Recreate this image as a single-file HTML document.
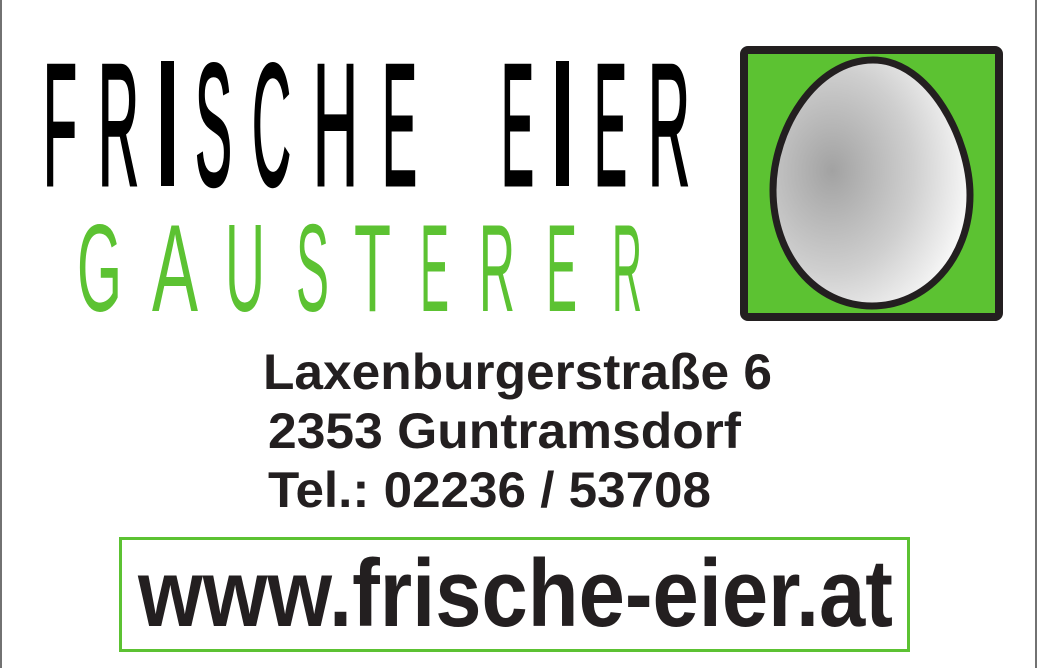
<!DOCTYPE html>
<html><head><meta charset="utf-8"><style>
html,body{margin:0;padding:0;background:#fff;}
svg{display:block}
</style></head><body>
<svg width="1039" height="668" viewBox="0 0 1039 668" xmlns="http://www.w3.org/2000/svg">
<defs>
<radialGradient id="eg" cx="0.3" cy="0.45" r="0.75">
<stop offset="0" stop-color="#a2a2a2"/>
<stop offset="0.55" stop-color="#cfcfcf"/>
<stop offset="0.85" stop-color="#eeeeee"/>
<stop offset="1" stop-color="#ffffff"/>
</radialGradient>
</defs>
<rect x="0" y="0" width="1039" height="668" fill="#fff"/>
<line x1="1" y1="0" x2="1" y2="668" stroke="#444" stroke-width="1.5"/>
<line x1="1036" y1="0" x2="1036" y2="668" stroke="#444" stroke-width="1.5"/>
<g font-family="Liberation Sans, sans-serif">
<g fill="#000" stroke="#000" stroke-width="3" font-size="174">
<text x="43" y="185" textLength="34" lengthAdjust="spacingAndGlyphs">F</text>
<text x="98" y="185" textLength="41" lengthAdjust="spacingAndGlyphs">R</text>
<text x="195" y="185" textLength="37" lengthAdjust="spacingAndGlyphs">S</text>
<text x="252" y="185" textLength="39" lengthAdjust="spacingAndGlyphs">C</text>
<text x="313" y="185" textLength="45" lengthAdjust="spacingAndGlyphs">H</text>
<text x="382" y="185" textLength="35" lengthAdjust="spacingAndGlyphs">E</text>
<text x="501" y="185" textLength="33" lengthAdjust="spacingAndGlyphs">E</text>
<text x="594" y="185" textLength="33" lengthAdjust="spacingAndGlyphs">E</text>
<text x="648" y="185" textLength="42" lengthAdjust="spacingAndGlyphs">R</text>
</g>
<rect x="161" y="61" width="13" height="125" fill="#000"/>
<rect x="556" y="61" width="13" height="125" fill="#000"/>
<g fill="#5cc232" font-size="124">
<text x="77" y="311" textLength="45" lengthAdjust="spacingAndGlyphs">G</text>
<text x="152" y="311" textLength="46" lengthAdjust="spacingAndGlyphs">A</text>
<text x="225" y="311" textLength="40" lengthAdjust="spacingAndGlyphs">U</text>
<text x="296" y="311" textLength="33" lengthAdjust="spacingAndGlyphs">S</text>
<text x="354" y="311" textLength="37" lengthAdjust="spacingAndGlyphs">T</text>
<text x="420" y="311" textLength="29" lengthAdjust="spacingAndGlyphs">E</text>
<text x="479" y="311" textLength="36" lengthAdjust="spacingAndGlyphs">R</text>
<text x="546" y="311" textLength="31" lengthAdjust="spacingAndGlyphs">E</text>
<text x="612" y="311" textLength="30" lengthAdjust="spacingAndGlyphs">R</text>
</g>
<g font-weight="bold" font-size="50" fill="#231f20">
<text x="263" y="389" textLength="509" lengthAdjust="spacingAndGlyphs">Laxenburgerstraße 6</text>
<text x="268" y="448" textLength="473" lengthAdjust="spacingAndGlyphs">2353 Guntramsdorf</text>
<text x="268" y="507" textLength="443" lengthAdjust="spacingAndGlyphs">Tel.: 02236 / 53708</text>
</g>
<rect x="120.5" y="538.5" width="788" height="112" fill="none" stroke="#5cc232" stroke-width="3"/>
<text x="138" y="626" font-weight="bold" font-size="96" fill="#231f20" textLength="755" lengthAdjust="spacingAndGlyphs">www.frische-eier.at</text>
</g>
<rect x="744" y="50" width="255" height="267" rx="4" fill="#5cc232" stroke="#231f20" stroke-width="8"/>
<path d="M873 60 C 930 60, 970 140, 970 195 C 970 260, 925 306, 872 306 C 815 306, 773 255, 773 190 C 773 130, 815 60, 873 60 Z" fill="url(#eg)" stroke="#231f20" stroke-width="7"/>
</svg>
</body></html>
